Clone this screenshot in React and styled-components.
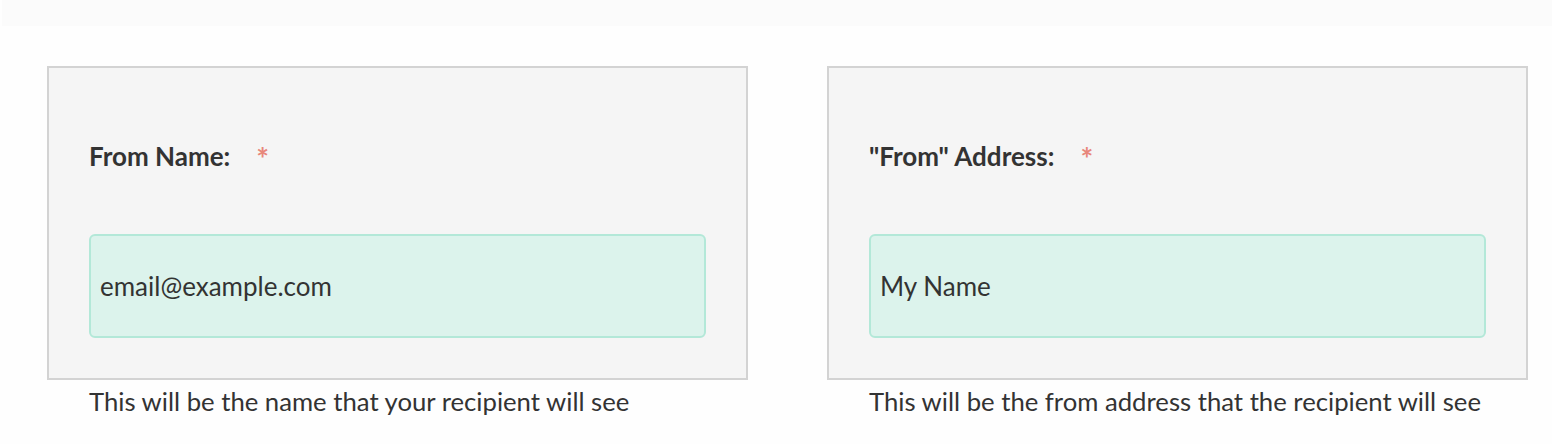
import styled, { createGlobalStyle } from "styled-components";

const GlobalStyle = createGlobalStyle`
  body {
    margin: 0;
    background: #fefefe;
    font-family: Lato, "Open Sans", sans-serif;
    color: #333333;
  }
`;

const TopBar = styled.div`
  height: 26px;
  margin-left: 2px;
  background: #fbfbfb;
`;

const Row = styled.div`
  display: flex;
  gap: 79px;
  padding: 40px 0 0 47px;
`;

const Field = styled.div`
  width: 701px;
`;

const Card = styled.div`
  box-sizing: border-box;
  border: 2px solid #d3d3d3;
  background: #f5f5f5;
  padding: 72px 40px 40px 40px;
`;

const Label = styled.label`
  display: flex;
  align-items: flex-start;
  height: 32px;
  font-size: 26px;
  line-height: 32px;
  font-weight: 700;
  color: #333333;
`;

const Required = styled.span`
  color: #e8877b;
  font-size: 30px;
  line-height: 27px;
  margin-left: 26px;
  margin-top: 5px;
`;

const Input = styled.div`
  box-sizing: border-box;
  margin-top: 62px;
  height: 104px;
  display: flex;
  align-items: center;
  padding-left: 9px;
  border: 2px solid #b3e8d8;
  border-radius: 6px;
  background: #dcf3ec;
  font-size: 26px;
  color: #333333;
`;

const Help = styled.p`
  margin: 6px 0 0 42px;
  font-size: 25.7px;
  line-height: 30px;
  color: #333333;
`;

const fields = [
  {
    label: "From Name:",
    value: "email@example.com",
    help: "This will be the name that your recipient will see",
  },
  {
    label: "\"From\" Address:",
    value: "My Name",
    help: "This will be the from address that the recipient will see",
  },
];

const App = () => {
  return (
    <>
      <GlobalStyle />
      <TopBar />
      <Row>
        {fields.map(({ label, value, help }) => (
          <Field key={label}>
            <Card>
              <Label>
                {label}
                <Required>*</Required>
              </Label>
              <Input>{value}</Input>
            </Card>
            <Help>{help}</Help>
          </Field>
        ))}
      </Row>
    </>
  );
};

export default App;
